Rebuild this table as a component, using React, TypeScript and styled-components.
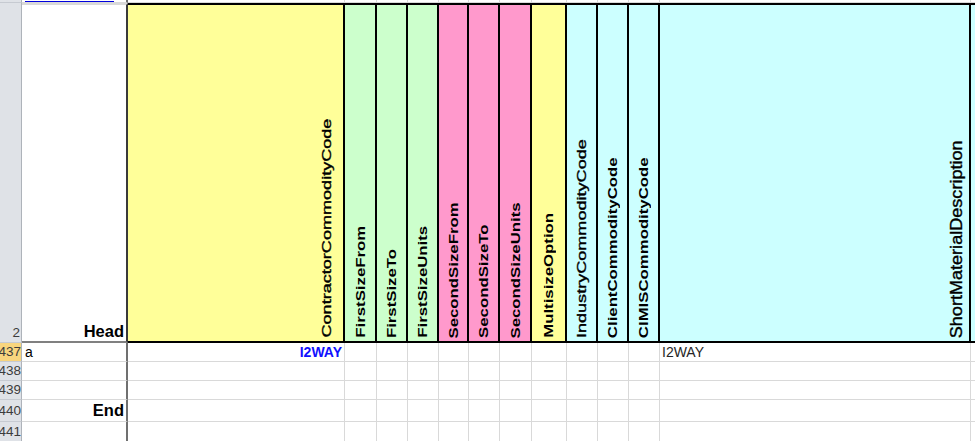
import React from "react";
import styled, { createGlobalStyle } from "styled-components";

type Fill = "yellow" | "green" | "pink" | "cyan";

const fills: Record<Fill, string> = {
  yellow: "#ffff99",
  green: "#ccffcc",
  pink: "#ff99cc",
  cyan: "#ccffff",
};

type Column = {
  id: string;
  width: number;
  fill: Fill;
  label?: string;
  bold?: boolean;
  size?: number;
  stretch?: number;
  align?: "center" | "end";
  pad?: number;
};

const columns: Column[] = [
  { id: "B", width: 217, fill: "yellow", label: "ContractorCommodityCode", align: "end", pad: 10 },
  { id: "C", width: 32, fill: "green", label: "FirstSizeFrom", bold: true },
  { id: "D", width: 31, fill: "green", label: "FirstSizeTo", bold: true },
  { id: "E", width: 31, fill: "green", label: "FirstSizeUnits", bold: true },
  { id: "F", width: 30, fill: "pink", label: "SecondSizeFrom", bold: true },
  { id: "G", width: 31, fill: "pink", label: "SecondSizeTo", bold: true },
  { id: "H", width: 32, fill: "pink", label: "SecondSizeUnits", bold: true },
  { id: "I", width: 35, fill: "yellow", label: "MultisizeOption", bold: true },
  { id: "J", width: 31, fill: "cyan", label: "IndustryCommodityCode" },
  { id: "K", width: 31, fill: "cyan", label: "ClientCommodityCode", bold: true },
  { id: "L", width: 31, fill: "cyan", label: "CIMISCommodityCode", bold: true },
  {
    id: "M",
    width: 311,
    fill: "cyan",
    label: "ShortMaterialDescription",
    align: "end",
    pad: 5,
    size: 16.3,
    stretch: 1.11,
  },
  { id: "N", width: 0, fill: "cyan" },
];

type Row = {
  num: string;
  height: number;
  selected?: boolean;
  name?: string;
  nameBold?: boolean;
  values?: Record<string, { text: string; link?: boolean }>;
};

const rows: Row[] = [
  {
    num: "437",
    height: 19,
    selected: true,
    name: "a",
    values: { B: { text: "I2WAY", link: true }, M: { text: "I2WAY" } },
  },
  { num: "438", height: 19 },
  { num: "439", height: 19 },
  { num: "440", height: 22, name: "End", nameBold: true },
  { num: "441", height: 20 },
];

const template = [
  "22px",
  "106px",
  ...columns.map((c) => (c.width ? `${c.width}px` : "1fr")),
].join(" ");

export default function App() {
  return (
    <>
      <GlobalStyle />
      <Sheet
        style={{
          gridTemplateColumns: template,
          gridTemplateRows: ["3px", "340px", ...rows.map((r) => `${r.height}px`)].join(" "),
        }}
      >
        {/* partly scrolled row 1 */}
        <RowHead />
        <NameCell>
          <LinkUnderline />
        </NameCell>
        {columns.map((c) => (
          <GridCell key={`top-${c.id}`} $last={!c.width} />
        ))}

        {/* header row */}
        <RowHead $bottom>2</RowHead>
        <HeadName>Head</HeadName>
        {columns.map((c) => (
          <HeadCell
            key={`head-${c.id}`}
            $fill={fills[c.fill]}
            $align={c.align ?? "center"}
            $pad={c.pad ?? 0}
            $last={!c.width}
          >
            {c.label && (
              <Stretch $by={c.stretch ?? (c.bold ? 1.29 : 1.39)}>
                <Label $bold={!!c.bold} $size={c.size ?? 13}>
                  {c.label}
                </Label>
              </Stretch>
            )}
          </HeadCell>
        ))}

        {/* data rows */}
        {rows.map((r) => (
          <React.Fragment key={r.num}>
            <RowHead $selected={r.selected}>{r.num}</RowHead>
            <NameCell $right={!!r.nameBold}>
              {r.name && <NameText $bold={!!r.nameBold}>{r.name}</NameText>}
            </NameCell>
            {columns.map((c) => {
              const v = r.values?.[c.id];
              return (
                <GridCell key={`${r.num}-${c.id}`} $last={!c.width} $right={!!v?.link}>
                  {v && <Value $link={!!v.link}>{v.text}</Value>}
                </GridCell>
              );
            })}
          </React.Fragment>
        ))}
      </Sheet>
    </>
  );
}

const GlobalStyle = createGlobalStyle`
  html, body {
    margin: 0;
    background: #ffffff;
    overflow: hidden;
  }
  body {
    font-family: "Liberation Sans", Arial, sans-serif;
    color: #000;
  }
`;

const Sheet = styled.div`
  display: grid;
  width: 975px;
  height: 441px;
  overflow: hidden;
`;

const RowHead = styled.div<{ $selected?: boolean; $bottom?: boolean }>`
  display: flex;
  align-items: ${(p) => (p.$bottom ? "flex-end" : "center")};
  justify-content: flex-end;
  overflow: hidden;
  padding: ${(p) => (p.$bottom ? "0 1px 3px 0" : "0")};
  background: ${(p) => (p.$selected ? "#f8d57e" : "#dfe2e7")};
  border-right: 1px solid #aeb3ba;
  border-bottom: 1px solid #c6cad1;
  font-size: 13.5px;
  line-height: 1;
  color: #3c3c3c;
  white-space: nowrap;
`;

const NameCell = styled.div<{ $right?: boolean }>`
  display: flex;
  align-items: center;
  justify-content: ${(p) => (p.$right ? "flex-end" : "flex-start")};
  padding: 0 2px 0 3px;
  border-right: 2px solid #707070;
  border-bottom: 1px solid #d9d9d9;
  overflow: hidden;
`;

const LinkUnderline = styled.span`
  align-self: flex-start;
  display: block;
  width: 89px;
  margin-top: 1px;
  border-top: 1px solid #0000dd;
`;

const NameText = styled.span<{ $bold: boolean }>`
  font-size: ${(p) => (p.$bold ? "16.5px" : "14px")};
  font-weight: ${(p) => (p.$bold ? 700 : 400)};
  line-height: 1;
  white-space: nowrap;
`;

const HeadName = styled.div`
  display: flex;
  align-items: flex-end;
  justify-content: flex-end;
  padding: 0 2px 2px 0;
  border-top: 2px solid #d9d9d9;
  border-right: 2px solid #3a3a3a;
  border-bottom: 2px solid #808080;
  font-size: 16.5px;
  font-weight: 700;
  line-height: 1;
`;

const HeadCell = styled.div<{
  $fill: string;
  $align: "center" | "end";
  $pad: number;
  $last: boolean;
}>`
  display: flex;
  align-items: flex-end;
  justify-content: ${(p) => (p.$align === "end" ? "flex-end" : "center")};
  padding: 0 ${(p) => p.$pad}px 3px 0;
  background: ${(p) => p.$fill};
  border-top: 2px solid #000;
  border-bottom: 2px solid #000;
  border-right: ${(p) => (p.$last ? "none" : "2px solid #000")};
  overflow: hidden;
`;

/* Excel draws the rotated captions wider than upright text; stretch along the reading axis */
const Stretch = styled.span<{ $by: number }>`
  display: block;
  transform-origin: 50% 100%;
  transform: scaleY(${(p) => p.$by});
`;

const Label = styled.span<{ $bold: boolean; $size: number }>`
  display: block;
  writing-mode: vertical-rl;
  transform: rotate(180deg);
  font-size: ${(p) => p.$size}px;
  font-weight: ${(p) => (p.$bold ? 700 : 400)};
  -webkit-text-stroke: ${(p) => (p.$bold ? "0" : "0.35px")} #000;
  line-height: 1;
  white-space: nowrap;
  color: #000;
`;

const GridCell = styled.div<{ $last: boolean; $right?: boolean }>`
  display: flex;
  align-items: center;
  justify-content: ${(p) => (p.$right ? "flex-end" : "flex-start")};
  padding: 0 2px;
  border-right: ${(p) => (p.$last ? "none" : "1px solid #d9d9d9")};
  border-bottom: 1px solid #d9d9d9;
  overflow: hidden;
`;

const Value = styled.span<{ $link: boolean }>`
  font-size: 14px;
  font-weight: ${(p) => (p.$link ? 700 : 400)};
  color: ${(p) => (p.$link ? "#1010ff" : "#262626")};
  line-height: 1;
  white-space: nowrap;
`;
